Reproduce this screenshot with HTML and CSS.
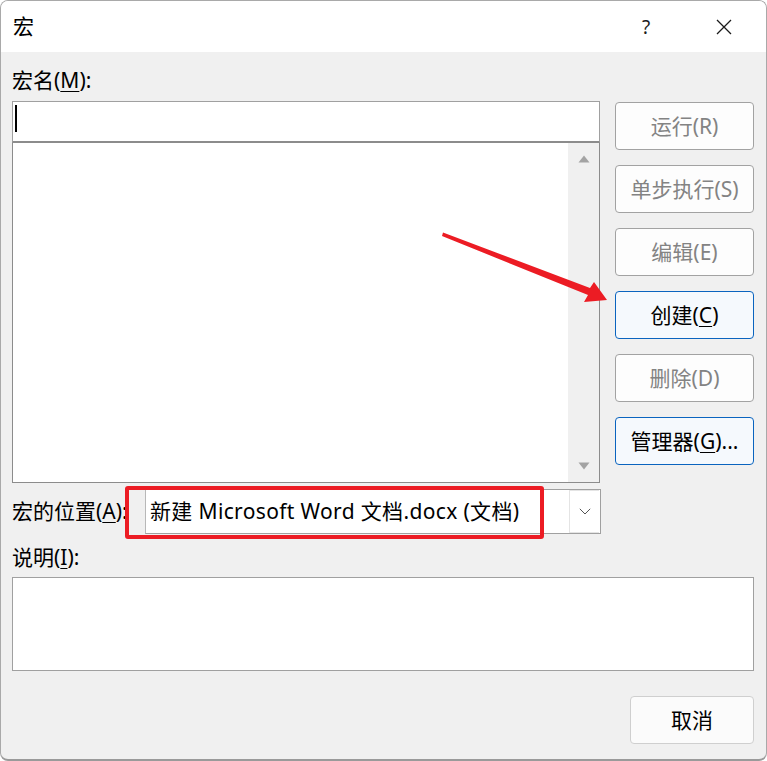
FILE: index.html
```html
<!DOCTYPE html>
<html lang="zh-CN">
<head>
<meta charset="utf-8">
<title>宏</title>
<link rel="stylesheet" href="styles.css">
</head>
<body>
<div class="window">
  <div class="titlebar">
    <span class="title">宏</span>
    <span class="help">?</span>
    <span class="close">
      <svg width="16" height="16" viewBox="0 0 16 16"><path d="M1 1 L15 15 M15 1 L1 15" stroke="#1a1a1a" stroke-width="1.3" fill="none"/></svg>
    </span>
  </div>
  <div class="content">
    <div class="label name-label">宏名(<u>M</u>):</div>
    <div class="main">
      <div class="left">
        <div class="input"><span class="caret"></span></div>
        <div class="list">
          <div class="scrollbar">
            <svg class="arrow-up" width="12" height="8" viewBox="0 0 12 8"><path d="M6 0.5 L11.5 7.5 L0.5 7.5 Z" fill="#a3a3a3"/></svg>
            <svg class="arrow-down" width="12" height="8" viewBox="0 0 12 8"><path d="M0.5 0.5 L11.5 0.5 L6 7.5 Z" fill="#a3a3a3"/></svg>
          </div>
        </div>
      </div>
      <div class="buttons">
        <div class="btn disabled">运行(R)</div>
        <div class="btn disabled">单步执行(S)</div>
        <div class="btn disabled">编辑(E)</div>
        <div class="btn active">创建(<u>C</u>)</div>
        <div class="btn disabled">删除(D)</div>
        <div class="btn active">管理器(<u>G</u>)...</div>
      </div>
    </div>
    <div class="location-row">
      <div class="label loc-label">宏的位置(<u>A</u>):</div>
      <div class="combo">
        <span class="combo-text">新建 Microsoft Word 文档.docx (文档)</span>
        <span class="combo-btn">
          <svg width="12" height="7" viewBox="0 0 12 7"><path d="M0.8 0.8 L6 6 L11.2 0.8" stroke="#555" stroke-width="1" fill="none"/></svg>
        </span>
      </div>
    </div>
    <div class="label desc-label">说明(<u>I</u>):</div>
    <div class="desc"></div>
    <div class="footer">
      <div class="btn cancel">取消</div>
    </div>
  </div>
  <div class="highlight"></div>
  <svg class="pointer" width="767" height="761" viewBox="0 0 767 761">
    <path d="M443 232.5 L590 288 L594 282 L607 300 L584 302 L588 295 L442 236 Z" fill="#ec1c24"/>
  </svg>
</div>
</body>
</html>
```

FILE: styles.css
```css
* { box-sizing: border-box; }
html, body { margin: 0; padding: 0; background: #ffffff; }
body {
  font-family: "Noto Sans", "Noto Sans CJK SC", sans-serif;
  font-size: 21px;
  color: #000;
}
u { text-decoration: underline; text-underline-offset: 3px; text-decoration-thickness: 1px; }
.window {
  position: relative;
  width: 767px;
  height: 761px;
  border: 1px solid #a9a9a9;
  border-bottom: 2px solid #9a9a9a;
  border-radius: 8px;
  background: #f0f0f0;
  overflow: hidden;
}
.titlebar {
  height: 51px;
  background: #ffffff;
  display: flex;
  align-items: center;
  padding-left: 12px;
}
.title { font-size: 21px; flex: 1; line-height: 1; margin-top: -1px; }
.help { font-size: 19px; width: 20px; text-align: center; margin-right: 60px; color: #1a1a1a; font-family: "Noto Sans", sans-serif; }
.close { width: 16px; height: 16px; margin-right: 34px; display: flex; }
.content {
  padding: 0 12px 0 11px;
  display: flex;
  flex-direction: column;
}
.label { line-height: 1; white-space: nowrap; }
.name-label { height: 49px; padding-top: 18px; }
.main { display: flex; gap: 15px; }
.left { width: 588px; display: flex; flex-direction: column; }
.input {
  height: 42px;
  background: #fff;
  border: 1px solid #a0a0a0;
  border-bottom: 2px solid #8c8c8c;
  padding: 3px 2px;
}
.caret { display: block; width: 2px; height: 27px; background: #000; }
.list {
  height: 340px;
  background: #fff;
  border: 1px solid #8c8c8c;
  border-top: none;
  display: flex;
  justify-content: flex-end;
}
.scrollbar {
  width: 31px;
  background: #f0f0f0;
  display: flex;
  flex-direction: column;
  align-items: center;
  justify-content: space-between;
  padding: 12px 0 12px 0;
}
.buttons {
  width: 139px;
  display: flex;
  flex-direction: column;
  gap: 15px;
  padding-top: 1px;
}
.btn {
  height: 48px;
  border: 1px solid #a2a2a2;
  border-radius: 4px;
  background: #fdfdfd;
  display: flex;
  align-items: center;
  justify-content: center;
  white-space: nowrap;
  line-height: 1;
}
.btn.disabled { color: #838383; }
.btn.active { border-color: #0a64bf; background: #f5f9fd; color: #000; }
.location-row {
  display: flex;
  align-items: center;
  height: 54px;
  padding-top: 3px;
}
.loc-label { width: 133px; }
.combo {
  width: 456px;
  height: 45px;
  border: 1px solid #a0a0a0;
  border-left: 1px solid #b8b8b8;
  background: #fff;
  display: flex;
  align-items: center;
  padding-left: 4px;
}
.combo-text { flex: 1; white-space: nowrap; line-height: 1; letter-spacing: 0.35px; }
.combo-btn {
  width: 30px;
  height: 43px;
  border: 1px solid #e4e4e4;
  border-right: none;
  display: flex;
  align-items: center;
  justify-content: center;
  margin-right: 1px;
}
.desc-label { height: 40px; padding-top: 10px; }
.desc {
  height: 94px;
  background: #fff;
  border: 1px solid #a0a0a0;
}
.footer {
  display: flex;
  justify-content: flex-end;
  padding-top: 25px;
}
.btn.cancel {
  width: 124px;
  height: 48px;
  border-color: #cfcfcf;
  background: #fbfbfb;
}
.highlight {
  position: absolute;
  left: 124px;
  top: 485px;
  width: 419px;
  height: 53px;
  border: 4px solid #ec1c24;
  border-radius: 3px;
}
.pointer { position: absolute; left: -1px; top: -1px; pointer-events: none; }
```
